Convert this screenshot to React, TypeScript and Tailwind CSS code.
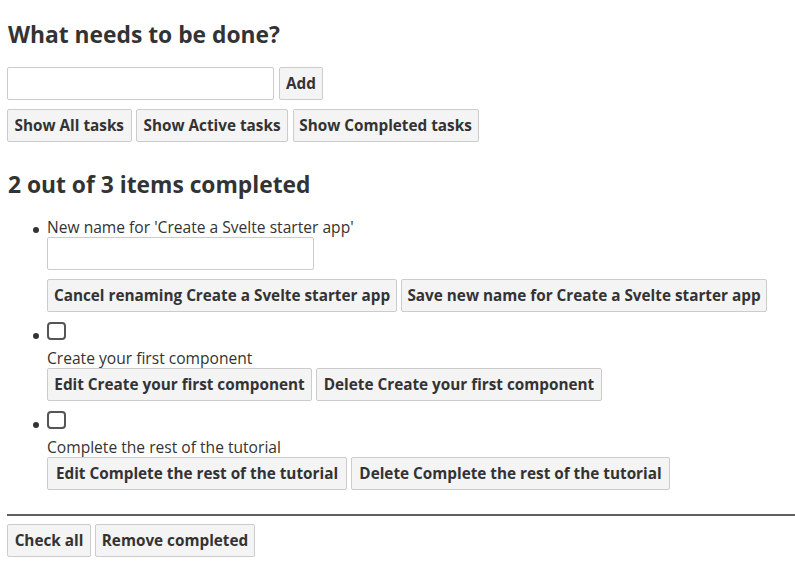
import React from "react";

const font = { fontFamily: '"Open Sans", "Noto Sans", sans-serif' };

function Btn({ w, children }: { w: string; children: React.ReactNode }) {
  return (
    <button
      className={`${w} h-[33px] shrink-0 border border-[#cccccc] rounded-[2px] bg-[#f4f4f4] text-[#333] text-[15.3px] font-bold leading-[18px] flex items-center justify-center whitespace-nowrap pb-[2px]`}
    >
      {children}
    </button>
  );
}

function Bullet({ mt }: { mt: string }) {
  return <span className={`w-[6px] h-[6px] rounded-full bg-[#333] shrink-0 ml-[-14px] mr-[8px] ${mt}`} />;
}

function Checkbox() {
  return <span className="w-[19px] h-[18px] border-2 border-[#555] rounded-[4px] bg-white shrink-0 block" />;
}

export default function App() {
  return (
    <div className="pl-[7px] bg-white text-[#333] min-h-[584px] w-[795px]" style={font}>
      <h2 className="pt-[20px] pl-[1px] h-[49px] text-[22.8px] font-bold leading-[29px]">What needs to be done?</h2>
      <div className="mt-[18px] flex gap-[5px]">
        <div className="w-[267px] h-[33px] border border-[#cccccc] rounded-[2px] bg-white" />
        <Btn w="w-[44px]">Add</Btn>
      </div>
      <div className="mt-[9px] flex gap-[4.5px]">
        <Btn w="w-[124.5px]">Show All tasks</Btn>
        <Btn w="w-[152px]">Show Active tasks</Btn>
        <Btn w="w-[186px]">Show Completed tasks</Btn>
      </div>
      <h2 className="mt-[28px] pl-[1px] h-[29px] text-[22.8px] font-bold leading-[29px]">2 out of 3 items completed</h2>
      <ul className="pl-[40px]">
        <li className="mt-[19px] flex flex-col">
          <div className="flex items-start h-[18px]">
            <Bullet mt="mt-[9px]" />
            <span className="text-[15.6px] leading-[18px]">New name for 'Create a Svelte starter app'</span>
          </div>
          <div className="mt-[1px] w-[267px] h-[33px] border border-[#cccccc] rounded-[2px] bg-white" />
          <div className="mt-[9px] flex gap-[4px]">
            <Btn w="w-[350px]">Cancel renaming Create a Svelte starter app</Btn>
            <Btn w="w-[366px]">Save new name for Create a Svelte starter app</Btn>
          </div>
        </li>
        <li className="mt-[10px] flex flex-col">
          <div className="flex items-start h-[18px]">
            <Bullet mt="mt-[10.5px]" />
            <Checkbox />
          </div>
          <span className="mt-[9px] text-[15.6px] leading-[18px]">Create your first component</span>
          <div className="mt-[1px] flex gap-[4px]">
            <Btn w="w-[265px]">Edit Create your first component</Btn>
            <Btn w="w-[286px]">Delete Create your first component</Btn>
          </div>
        </li>
        <li className="mt-[10px] flex flex-col">
          <div className="flex items-start h-[18px]">
            <Bullet mt="mt-[10.5px]" />
            <Checkbox />
          </div>
          <span className="mt-[9px] text-[15.6px] leading-[18px]">Complete the rest of the tutorial</span>
          <div className="mt-[1px] flex gap-[4px]">
            <Btn w="w-[300px]">Edit Complete the rest of the tutorial</Btn>
            <Btn w="w-[319px]">Delete Complete the rest of the tutorial</Btn>
          </div>
        </li>
      </ul>
      <hr className="mt-[24px] border-0 border-t-2 border-[#5f5f5f]" />
      <div className="mt-[8px] flex gap-[4px]">
        <Btn w="w-[84px]">Check all</Btn>
        <Btn w="w-[160px]">Remove completed</Btn>
      </div>
    </div>
  );
}
